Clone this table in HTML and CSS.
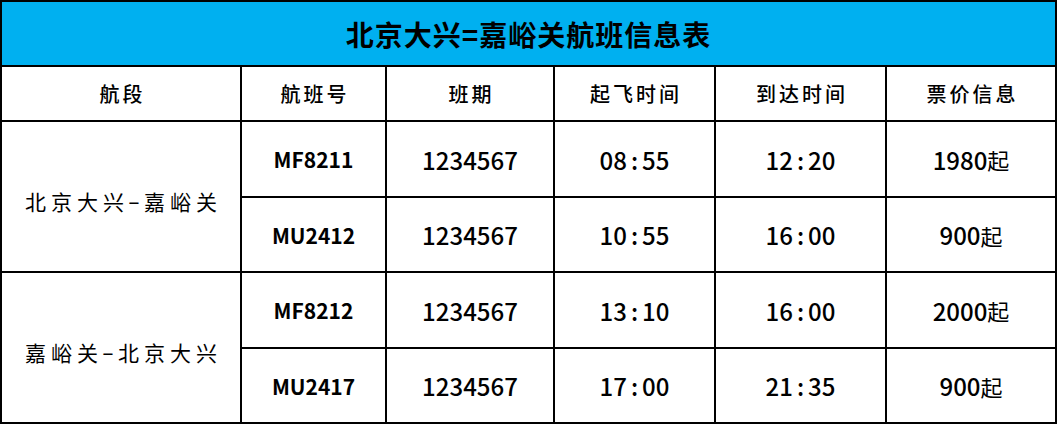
FILE: index.html
```html
<!DOCTYPE html>
<html lang="zh">
<head>
<meta charset="utf-8">
<link rel="stylesheet" href="styles.css">
</head>
<body>
<div class="sheet">
  <div class="cell title">北京大兴=嘉峪关航班信息表</div>
  <div class="cell head">航段</div>
  <div class="cell head">航班号</div>
  <div class="cell head">班期</div>
  <div class="cell head">起飞时间</div>
  <div class="cell head">到达时间</div>
  <div class="cell head">票价信息</div>

  <div class="cell route r1">北京大兴<span class="dash">-</span>嘉峪关</div>
  <div class="cell code">MF8211</div>
  <div class="cell num">1234567</div>
  <div class="cell num">08<span class="colon">:</span>55</div>
  <div class="cell num">12<span class="colon">:</span>20</div>
  <div class="cell num">1980<span class="qi">起</span></div>

  <div class="cell code">MU2412</div>
  <div class="cell num">1234567</div>
  <div class="cell num">10<span class="colon">:</span>55</div>
  <div class="cell num">16<span class="colon">:</span>00</div>
  <div class="cell num">900<span class="qi">起</span></div>

  <div class="cell route r2">嘉峪关<span class="dash">-</span>北京大兴</div>
  <div class="cell code">MF8212</div>
  <div class="cell num">1234567</div>
  <div class="cell num">13<span class="colon">:</span>10</div>
  <div class="cell num">16<span class="colon">:</span>00</div>
  <div class="cell num">2000<span class="qi">起</span></div>

  <div class="cell code">MU2417</div>
  <div class="cell num">1234567</div>
  <div class="cell num">17<span class="colon">:</span>00</div>
  <div class="cell num">21<span class="colon">:</span>35</div>
  <div class="cell num">900<span class="qi">起</span></div>
</div>
</body>
</html>
```

FILE: styles.css
```css
html, body {
  margin: 0;
  padding: 0;
  background: #fff;
}

.sheet {
  display: grid;
  grid-template-columns: 238px 143px 166px 159px 169px 168px;
  grid-template-rows: 63px 53px 74px 73px 74px 73px;
  gap: 2px;
  padding: 2px;
  background: #000;
  width: max-content;
  font-family: "Noto Sans CJK SC", sans-serif;
  color: #000;
}

.cell {
  background: #fff;
  display: flex;
  align-items: center;
  justify-content: center;
  white-space: nowrap;
}

.title {
  grid-column: 1 / -1;
  background: #00b0f0;
  font-size: 28px;
  font-weight: bold;
  letter-spacing: 1px;
}

.head {
  font-size: 20px;
  letter-spacing: 3px;
  font-weight: 500;
  padding-left: 3px;
}

.route {
  font-size: 21px;
  letter-spacing: 5px;
  padding-top: 8px;
  padding-left: 5px;
  box-sizing: border-box;
}
.dash {
  display: inline-block;
  width: 14px;
  margin-left: -2px;
  margin-right: 3px;
  text-align: center;
  transform: translateY(-1px) scaleX(1.7);
  letter-spacing: 0;
}
.r1 { grid-row: 3 / span 2; grid-column: 1; }
.r2 { grid-row: 5 / span 2; grid-column: 1; }

.code {
  font-size: 21px;
  font-weight: bold;
}

.num {
  font-size: 24px;
  font-weight: 500;
}

.colon {
  margin: 0 4px;
}

.qi {
  font-size: 22px;
  font-weight: 400;
}
```
